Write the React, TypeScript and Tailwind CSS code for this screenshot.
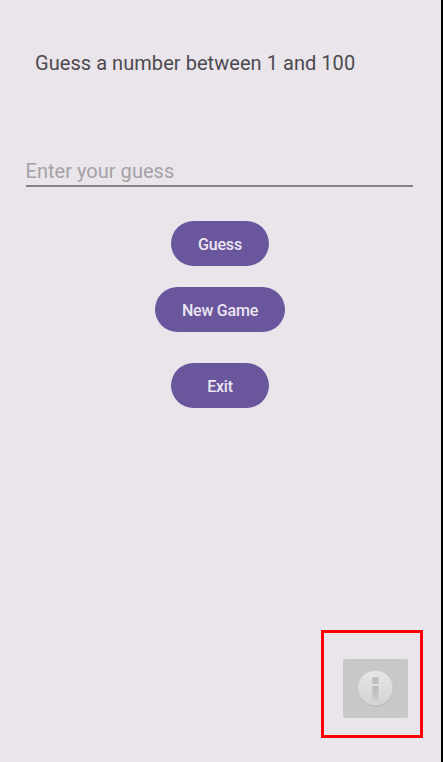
function InfoIcon() {
  return (
    <svg width="41" height="41" viewBox="0 0 41 41" aria-label="Info">
      <defs>
        <linearGradient id="disc" x1="0" y1="0" x2="0" y2="1">
          <stop offset="0" stopColor="#e6e6e6" />
          <stop offset="1" stopColor="#d3d3d3" />
        </linearGradient>
        <linearGradient id="stem" x1="0" y1="0" x2="0" y2="1">
          <stop offset="0" stopColor="#bababa" />
          <stop offset="1" stopColor="#cacaca" />
        </linearGradient>
      </defs>
      <circle cx="20.4" cy="21.1" r="17.6" fill="#b7b7b7" />
      <circle cx="20.4" cy="20.1" r="17.4" fill="url(#disc)" />
      <rect x="17.3" y="9.3" width="6.3" height="6.8" rx="0.7" fill="#bebebe" />
      <rect x="17.3" y="18" width="6.3" height="13.8" rx="0.7" fill="url(#stem)" />
    </svg>
  );
}

const button =
  "flex h-[45px] items-center justify-center rounded-full bg-[#6a569d] pt-[3px] text-[16px] leading-none font-medium tracking-[-0.2px] text-[#ece6f2]";

export default function App() {
  return (
    <main className="flex h-[762px] w-[443px] flex-col border-r-2 border-black bg-[#e9e5ea] font-[Roboto,sans-serif]">
      <h1 className="mt-[48px] ml-[35px] h-[30px] text-[20px] leading-[30px] font-normal tracking-[0.05px] whitespace-nowrap text-[#4d494f]">
        Guess a number between 1 and 100
      </h1>
      <input
        className="mt-[77px] ml-[25.5px] h-[32px] w-[387.5px] border-b-2 border-[#838087] pt-px text-[20px] tracking-[0.03px] text-[#4d494f] outline-none placeholder:text-[#a5a1a7]"
        placeholder="Enter your guess"
      />
      <div className="mt-[34px] flex w-[440px] flex-col items-center">
        <button className={`${button} w-[98px]`}>Guess</button>
        <button className={`${button} mt-[21.4px] w-[129.5px]`}>New Game</button>
        <button className={`${button} mt-[30.6px] w-[97.5px]`}>Exit</button>
      </div>
      <div className="mt-auto mr-[18px] mb-[24px] flex h-[108px] w-[102px] self-end border-3 border-[#ff0000] pt-[26px] pl-[19px]">
        <button className="flex h-[59px] w-[65px] shrink-0 items-center justify-center rounded-[2px] bg-[#c8c8c8]">
          <InfoIcon />
        </button>
      </div>
    </main>
  );
}
